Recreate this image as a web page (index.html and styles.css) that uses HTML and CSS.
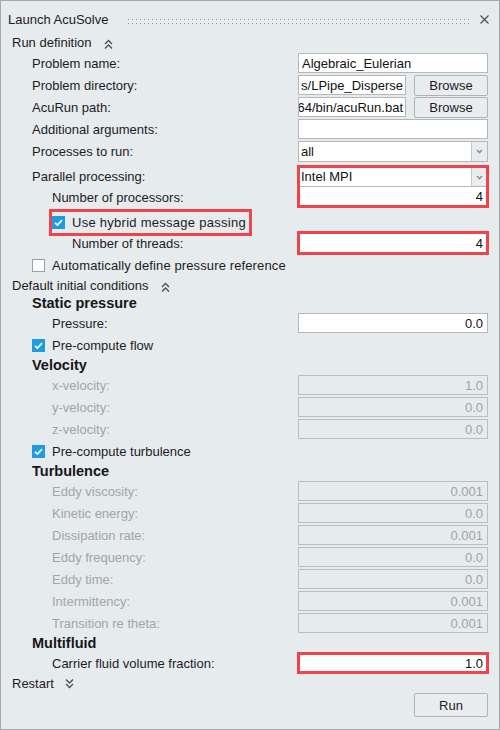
FILE: index.html
```html
<!DOCTYPE html>
<html>
<head>
<meta charset="utf-8">
<title>Launch AcuSolve</title>
<link rel="stylesheet" href="styles.css">
</head>
<body>
<div class="win">
  <div class="titlebar">
    <span class="title">Launch AcuSolve</span>
    <span class="grip"></span>
    <svg class="close" width="9" height="9" viewBox="0 0 9 9"><path d="M0.5 0.5L8.5 8.5M8.5 0.5L0.5 8.5" stroke="#4a4a4a" stroke-width="1.1" fill="none"/></svg>
  </div>

  <div class="section"><span>Run definition</span><svg class="chev up" width="9" height="11" viewBox="0 0 9 11"><path d="M1 5l3.5-3.5L8 5M1 9.5L4.5 6 8 9.5" fill="none" stroke="#4d4d4d" stroke-width="1.3"/></svg></div>

  <div class="row"><span class="lbl l1">Problem name:</span><div class="field">Algebraic_Eulerian</div></div>
  <div class="row"><span class="lbl l1">Problem directory:</span><div class="field short end"><span>s/LPipe_Disperse</span></div><button class="btn">Browse</button></div>
  <div class="row"><span class="lbl l1">AcuRun path:</span><div class="field short end"><span>64/bin/acuRun.bat</span></div><button class="btn">Browse</button></div>
  <div class="row"><span class="lbl l1">Additional arguments:</span><div class="field"></div></div>
  <div class="row"><span class="lbl l1">Processes to run:</span><div class="select"><span class="sel-text">all</span><span class="sel-arrow"><svg width="7" height="5" viewBox="0 0 7 5"><path d="M1 1l2.5 2.5L6 1" fill="none" stroke="#8b9094" stroke-width="1.6"/></svg></span></div></div>

  <div class="group">
    <div class="group-labels">
      <span class="glbl g1 l1">Parallel processing:</span>
      <span class="glbl g2 l2">Number of processors:</span>
    </div>
    <div class="group-ctrls hl-outline">
      <div class="select tall"><span class="sel-text">Intel MPI</span><span class="sel-arrow"><svg width="7" height="5" viewBox="0 0 7 5"><path d="M1 1l2.5 2.5L6 1" fill="none" stroke="#8b9094" stroke-width="1.6"/></svg></span></div>
      <div class="field num flat">4</div>
    </div>
  </div>

  <div class="row hybrid-row">
    <label class="hl-box"><span class="cb on"><svg width="13" height="13" viewBox="0 0 13 13"><path d="M3 6.8l2.4 2.3L10 4.2" fill="none" stroke="#fff" stroke-width="1.7"/></svg></span><span class="wide">Use hybrid message passing</span></label>
  </div>
  <div class="row"><span class="lbl l3">Number of threads:</span><div class="field num hl-outline big">4</div></div>
  <div class="row"><label class="chk l1"><span class="cb"></span><span class="wide2">Automatically define pressure reference</span></label></div>

  <div class="section sec-sm"><span>Default initial conditions</span><svg class="chev up" width="9" height="11" viewBox="0 0 9 11"><path d="M1 5l3.5-3.5L8 5M1 9.5L4.5 6 8 9.5" fill="none" stroke="#4d4d4d" stroke-width="1.3"/></svg></div>
  <div class="head">Static pressure</div>
  <div class="row"><span class="lbl l2">Pressure:</span><div class="field num">0.0</div></div>
  <div class="row"><label class="chk l1"><span class="cb on"><svg width="13" height="13" viewBox="0 0 13 13"><path d="M3 6.8l2.4 2.3L10 4.2" fill="none" stroke="#fff" stroke-width="1.7"/></svg></span><span>Pre-compute flow</span></label></div>
  <div class="head">Velocity</div>
  <div class="row dis"><span class="lbl l2">x-velocity:</span><div class="field num">1.0</div></div>
  <div class="row dis"><span class="lbl l2">y-velocity:</span><div class="field num">0.0</div></div>
  <div class="row dis"><span class="lbl l2">z-velocity:</span><div class="field num">0.0</div></div>
  <div class="row"><label class="chk l1"><span class="cb on"><svg width="13" height="13" viewBox="0 0 13 13"><path d="M3 6.8l2.4 2.3L10 4.2" fill="none" stroke="#fff" stroke-width="1.7"/></svg></span><span>Pre-compute turbulence</span></label></div>
  <div class="head">Turbulence</div>
  <div class="row dis"><span class="lbl l2">Eddy viscosity:</span><div class="field num">0.001</div></div>
  <div class="row dis"><span class="lbl l2">Kinetic energy:</span><div class="field num">0.0</div></div>
  <div class="row dis"><span class="lbl l2">Dissipation rate:</span><div class="field num">0.001</div></div>
  <div class="row dis"><span class="lbl l2">Eddy frequency:</span><div class="field num">0.0</div></div>
  <div class="row dis"><span class="lbl l2">Eddy time:</span><div class="field num">0.0</div></div>
  <div class="row dis"><span class="lbl l2">Intermittency:</span><div class="field num">0.001</div></div>
  <div class="row dis"><span class="lbl l2">Transition re theta:</span><div class="field num">0.001</div></div>
  <div class="head">Multifluid</div>
  <div class="row"><span class="lbl l2">Carrier fluid volume fraction:</span><div class="field num hl-outline">1.0</div></div>

  <div class="section sec-restart"><span>Restart</span><svg class="chev down" width="9" height="11" viewBox="0 0 9 11"><path d="M1 1.5L4.5 5 8 1.5M1 6L4.5 9.5 8 6" fill="none" stroke="#4d4d4d" stroke-width="1.3"/></svg></div>
  <div class="run-row"><button class="btn run">Run</button></div>
</div>
</body>
</html>
```

FILE: styles.css
```css
* { box-sizing: border-box; }
html, body { margin: 0; padding: 0; }
body {
  font: 13px "Liberation Sans", Arial, sans-serif;
  color: #1c1c1c;
  background: #e6ebee;
}
.win {
  width: 500px;
  height: 730px;
  border: 1px solid #a5a9ac;
  background: #e6ebee;
  overflow: hidden;
}
.titlebar {
  display: flex;
  align-items: center;
  height: 31px;
  padding: 6px 10px 0 7px;
}
.grip {
  flex: 1;
  height: 5px;
  margin: 3px 11px 0 17px;
  background-image:
    linear-gradient(to right, #e6ebee 3px, transparent 3px),
    linear-gradient(to bottom, #8f9396 1px, transparent 1px);
  background-size: 4px 4px, 4px 4px;
}
.close { display: block; }

.section {
  display: flex;
  align-items: center;
  height: 20px;
  padding: 0 11px;
}
.sec-sm { height: 18px; }
.sec-restart { height: 19px; }
.chev { display: block; margin-left: 12px; }
.chev.up { margin-top: 4px; }
.sec-restart .chev { margin-left: 11px; }

.row {
  display: flex;
  align-items: center;
  height: 22px;
  padding: 0 11px;
}
.lbl { flex: 1; white-space: nowrap; }
.l1 { padding-left: 20px; }
.l2 { padding-left: 40px; }
.l3 { padding-left: 60px; }

.head {
  height: 18px;
  display: flex;
  align-items: center;
  padding-left: 31px;
  font-weight: bold;
  font-size: 14.5px;
  color: #161616;
}

.field {
  width: 190px;
  height: 20px;
  border: 1px solid #b4b8bb;
  background: #fff;
  padding: 0 4px 0 3px;
  display: flex;
  align-items: center;
  white-space: nowrap;
  overflow: hidden;
  color: #111;
}
.field.short { width: 108px; padding-right: 2px; }
.field.end { justify-content: flex-end; }
.field.num { justify-content: flex-end; }
.field.big { height: 22px; }
.dis .lbl { color: #a2a5a8; }
.dis .field { background: #e6ebee; color: #9ea3a7; border-color: #babec1; }

.btn {
  width: 74px;
  height: 21px;
  margin-left: 8px;
  border: 1px solid #afb3b6;
  border-radius: 2px;
  background: #e9edf0;
  font: 13px "Liberation Sans", Arial, sans-serif;
  color: #1c1c1c;
  padding: 0;
}
.btn.run { height: 24px; margin: 0; }
.run-row {
  display: flex;
  justify-content: flex-end;
  padding: 0 11px;
  height: 24px;
}

.select {
  width: 190px;
  height: 21px;
  border: 1px solid #b4b8bb;
  background: #fff;
  display: flex;
}
.sel-text { flex: 1; padding-left: 2px; display: flex; align-items: center; color: #111; }
.sel-arrow {
  width: 16px;
  border-left: 1px solid #c4c8cb;
  background: #e9edf0;
  display: flex;
  align-items: center;
  justify-content: center;
}
.sel-arrow svg { display: block; margin-top: 1px; }

.group {
  display: flex;
  margin-top: 4px;
  padding: 0 11px;
  height: 41px;
}
.group-labels { flex: 1; display: flex; flex-direction: column; }
.glbl { display: flex; align-items: center; white-space: nowrap; }
.g1 { height: 21px; }
.g2 { height: 20px; }
.group-ctrls { width: 190px; display: flex; flex-direction: column; }
.group-ctrls .field { height: 20px; border-top: 0; }

.hl-outline { outline: 3px solid #f0444a; outline-offset: -2px; }

.hybrid-row {
  height: 27px;
  margin-top: 2px;
  margin-bottom: -4px;
  padding-left: 48px;
  align-items: flex-start;
}
.hl-box {
  display: inline-flex;
  align-items: center;
  height: 27px;
  border: 3px solid #f0444a;
  padding: 0 3px 0 0;
  gap: 7px;
  white-space: nowrap;
}
.wide { letter-spacing: 0.27px; }
.wide2 { letter-spacing: 0.12px; }
.chk { display: flex; align-items: center; gap: 7px; white-space: nowrap; }
.cb {
  width: 13px;
  height: 13px;
  border: 1px solid #9a9ea1;
  background: #fff;
  display: block;
  flex: none;
}
.cb.on { border: 0; background: #1f9be2; }
.cb svg { display: block; }
```
